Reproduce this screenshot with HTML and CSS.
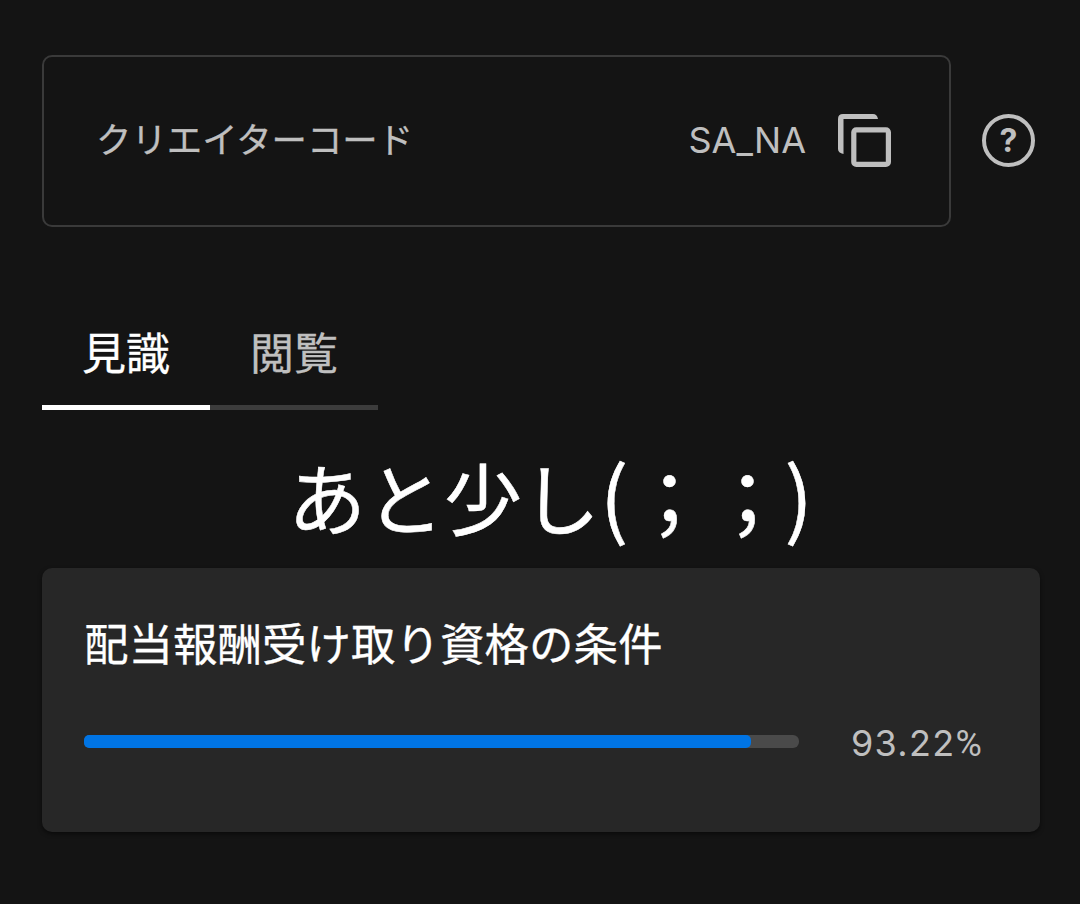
FILE: index.html
```
<!DOCTYPE html>
<html lang="ja">
    <head>
        <meta charset="UTF-8">
        <title>クリエイターコード</title>
        <link rel="stylesheet" href="styles.css">
    </head>
    <body>
        <div class="code-row">
            <div class="code-box">
                <span class="code-label">クリエイターコード</span>
                <span class="code-value">SA_NA</span>
                <svg class="copy-icon" viewBox="0 0 53 53">
                    <path d="M0 35V5Q0 0 5 0H35Q39 0 40 5H5.5V40Q0 39 0 35Z"/>
                    <rect x="15.8" y="15.8" width="34.6" height="34.6" rx="2.5"/>
                </svg>
            </div>
            <div class="help">?</div>
        </div>

        <div class="tabs">
            <div class="tab active">見識</div>
            <div class="tab">閲覧</div>
        </div>

        <div class="headline">あと少し<span class="paren">(</span><span class="face">；；</span><span class="paren">)</span></div>

        <div class="card">
            <div class="card-title">配当報酬受け取り資格の条件</div>
            <div class="progress">
                <div class="track">
                    <div class="fill" style="width: 93.22%"></div>
                </div>
                <span class="percent">93.22<span class="sign">%</span></span>
            </div>
        </div>
    </body>
</html>
```
FILE: styles.css
```
* {
    box-sizing: border-box;
}

body {
    margin: 0;
    height: 904px;
    padding: 55px 40px 0 42px;
    overflow: hidden;
    background-color: #141414;
    color: #bfbfbf;
    font-family: Inter, "Noto Sans CJK JP", sans-serif;
    white-space: nowrap;
}

/* Creator code */

.code-row {
    display: flex;
    align-items: center;
}

.code-box {
    display: flex;
    align-items: center;
    width: 909px;
    height: 172px;
    padding: 0 58px 2px 52px;
    border: 2px solid #3a3a3a;
    border-radius: 10px;
}

.code-label {
    flex: 1;
    padding-top: 2px;
    font-size: 35.4px;
    line-height: 50px;
    -webkit-text-stroke: 0.3px;
}

.code-value {
    margin-right: 32px;
    font-size: 36px;
    line-height: 50px;
}

.copy-icon {
    width: 53px;
    height: 53px;
    fill: #bfbfbf;
}

.copy-icon rect {
    fill: none;
    stroke: #bfbfbf;
    stroke-width: 5.2;
}

.help {
    display: flex;
    align-items: center;
    justify-content: center;
    width: 53px;
    height: 53px;
    margin: 0 0 2px 31px;
    border: 4px solid #bfbfbf;
    border-radius: 50%;
    font-size: 32px;
    font-weight: 700;
}

/* Tabs */

.tabs {
    display: flex;
    height: 110px;
    margin-top: 73px;
}

.tab {
    width: 168px;
    border-bottom: 5px solid #3c3c3c;
    font-size: 44px;
    line-height: 109px;
    text-align: center;
    -webkit-text-stroke: 0.3px;
}

.tab.active {
    border-color: #fff;
    color: #fff;
}

.headline {
    height: 158px;
    padding-left: 246px;
    color: #fff;
    font-family: "Noto Sans CJK JP", sans-serif;
    font-size: 78px;
    line-height: 172px;
    -webkit-text-stroke: 0.5px;
}

.headline .paren {
    font-size: 84px;
    line-height: 1;
}

.headline .face {
    margin: 0 -2px 0 2px;
}

/* Reward progress */

.card {
    height: 264px;
    padding: 42px 42px 0;
    border-radius: 10px;
    background-color: #272727;
    box-shadow: 0 2px 4px rgba(0, 0, 0, 0.5);
}

.card-title {
    color: #fff;
    font-size: 44.5px;
    line-height: 70px;
    -webkit-text-stroke: 0.3px;
}

.progress {
    display: flex;
    align-items: center;
    height: 50px;
    margin-top: 36px;
}

.track {
    width: 715px;
    height: 13px;
    border-radius: 6px;
    background-color: #4a4a4a;
}

.fill {
    height: 100%;
    border-radius: 5px;
    background-color: #0074e4;
}

.percent {
    margin-left: 52px;
    padding-top: 4px;
    font-size: 36px;
    letter-spacing: 1.3px;
}

.percent .sign {
    font-family: Roboto, sans-serif;
}
```
